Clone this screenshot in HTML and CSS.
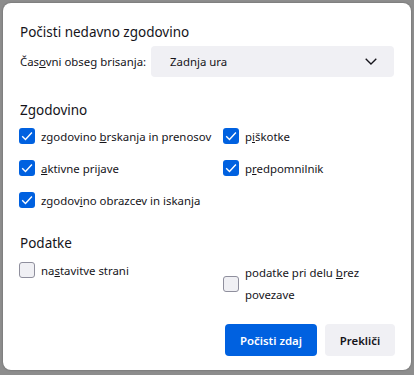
FILE: index.html
```html
<!DOCTYPE html>
<html lang="sl">
<head>
<meta charset="utf-8">
<link rel="stylesheet" href="styles.css">
</head>
<body>
<div class="dialog">
  <h1 class="title">Počisti nedavno zgodovino</h1>
  <div class="range">
    <span class="range-label">Čas<u>o</u>vni obseg brisanja:</span>
    <div class="select">
      <span>Zadnja ura</span>
      <svg class="chev" width="12" height="7" viewBox="0 0 12 7"><path d="M0.7 0.7 L6 6 L11.3 0.7" fill="none" stroke="#15141a" stroke-width="1.3"/></svg>
    </div>
  </div>

  <h2 class="section">Zgodovino</h2>
  <div class="grid history">
    <label class="item"><span class="box on"><svg width="16" height="16" viewBox="0 0 16 16"><path d="M3.2 8.2 L6.5 11.4 L12.9 4.6" fill="none" stroke="#fff" stroke-width="1.4"/></svg></span><span>zgodovino <u>b</u>rskanja in prenosov</span></label>
    <label class="item"><span class="box on"><svg width="16" height="16" viewBox="0 0 16 16"><path d="M3.2 8.2 L6.5 11.4 L12.9 4.6" fill="none" stroke="#fff" stroke-width="1.4"/></svg></span><span>p<u>i</u>škotke</span></label>
    <label class="item"><span class="box on"><svg width="16" height="16" viewBox="0 0 16 16"><path d="M3.2 8.2 L6.5 11.4 L12.9 4.6" fill="none" stroke="#fff" stroke-width="1.4"/></svg></span><span><u>a</u>ktivne prijave</span></label>
    <label class="item"><span class="box on"><svg width="16" height="16" viewBox="0 0 16 16"><path d="M3.2 8.2 L6.5 11.4 L12.9 4.6" fill="none" stroke="#fff" stroke-width="1.4"/></svg></span><span>p<u>r</u>edpomnilnik</span></label>
    <label class="item"><span class="box on"><svg width="16" height="16" viewBox="0 0 16 16"><path d="M3.2 8.2 L6.5 11.4 L12.9 4.6" fill="none" stroke="#fff" stroke-width="1.4"/></svg></span><span>zgodov<u>i</u>no obrazcev in iskanja</span></label>
  </div>

  <h2 class="section sec2">Podatke</h2>
  <div class="grid data">
    <label class="item short"><span class="box"></span><span>na<u>s</u>tavitve strani</span></label>
    <label class="item tall"><span class="box"></span><span class="two">podatke pri delu <u>b</u>rez<br>povezave</span></label>
  </div>

  <div class="actions">
    <button class="btn primary">Počisti zdaj</button>
    <button class="btn">Prekliči</button>
  </div>
</div>
</body>
</html>
```

FILE: styles.css
```css
html, body {
  margin: 0;
  padding: 0;
}
body {
  background: #8d8d8d;
  width: 414px;
  height: 375px;
  padding: 3px 0 0 3px;
  box-sizing: border-box;
  font-family: "Noto Sans", "Open Sans", sans-serif;
  color: #15141a;
  font-size: 11.4px;
}
.dialog {
  width: 408px;
  height: 367px;
  background: #fff;
  border-radius: 8px;
  box-sizing: border-box;
  padding: 19px 16px 0 16px;
  box-shadow: 0 0 2px rgba(0,0,0,0.35);
}
.title {
  margin: 0 0 0 1px;
  font-size: 13.5px;
  font-weight: 400;
  line-height: 20px;
}
.range {
  display: flex;
  align-items: center;
  margin-top: 4px;
  padding-left: 1px;
}
.range-label {
  width: 131px;
  flex: none;
  white-space: nowrap;
}
.select {
  width: 243px;
  height: 31px;
  background: #f0f0f4;
  border-radius: 4px;
  display: flex;
  align-items: center;
  justify-content: space-between;
  padding: 0 17px 0 19px;
  box-sizing: border-box;
}
.chev { display: block; }
.section {
  margin: 23px 0 0 1px;
  font-size: 13.5px;
  font-weight: 400;
  line-height: 20px;
}
.sec2 { margin-top: 17px; }
.grid {
  display: grid;
  grid-template-columns: 204px 1fr;
}
.history {
  grid-auto-rows: 32px;
}
.item {
  display: flex;
  align-items: center;
  gap: 6px;
  white-space: nowrap;
}
.box {
  width: 16px;
  height: 16px;
  flex: none;
  border-radius: 3px;
  box-sizing: border-box;
  background: #f0f0f4;
  border: 1px solid #8f8f9d;
}
.box.on {
  background: #0061e0;
  border: none;
}
.box svg { display: block; }
.data {
  margin-top: 6px;
  align-items: start;
}
.short { height: 22px; }
.tall { margin-top: 3px; }
.two { line-height: 22px; }
.actions {
  display: flex;
  justify-content: flex-end;
  gap: 8px;
  margin-top: 18px;
}
.btn {
  height: 32px;
  border: none;
  border-radius: 4px;
  background: #f0f0f4;
  color: #15141a;
  font-family: inherit;
  font-size: 11.4px;
  font-weight: 600;
  padding: 0;
  width: 70px;
}
.btn.primary {
  background: #0061e0;
  color: #fff;
  width: 92px;
}
```
